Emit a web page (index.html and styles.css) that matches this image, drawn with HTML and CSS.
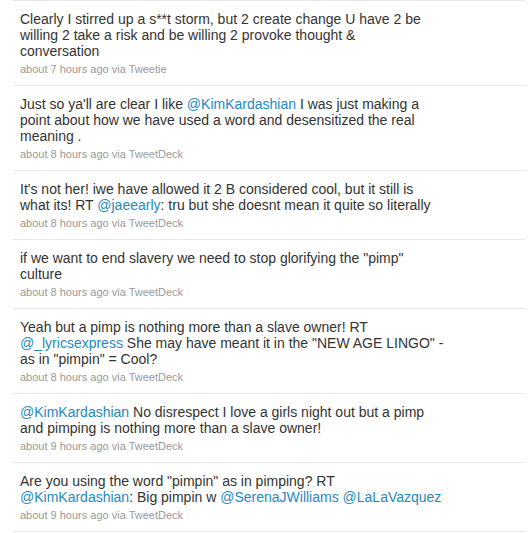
FILE: index.html
```html
<!doctype html>
<html lang="en">
<head>
    <meta charset="UTF-8">
    <title>Tweets</title>
    <link rel="stylesheet" href="styles.css">
</head>
<body>
    <ul class="timeline">
        <li class="status">
            <span class="entry">Clearly I stirred up a s**t storm, but 2 create change U have 2 be<br>willing 2 take a risk and be willing 2 provoke thought &amp;<br>conversation</span>
            <span class="meta">about 7 hours ago via Tweetie</span>
        </li>
        <li class="status">
            <span class="entry">Just so ya'll are clear I like <a href="#">@KimKardashian</a> I was just making a<br>point about how we have used a word and desensitized the real<br>meaning .</span>
            <span class="meta">about 8 hours ago via TweetDeck</span>
        </li>
        <li class="status">
            <span class="entry">It's not her! iwe have allowed it 2 B considered cool, but it still is<br>what its! RT <a href="#">@jaeearly</a>: tru but she doesnt mean it quite so literally</span>
            <span class="meta">about 8 hours ago via TweetDeck</span>
        </li>
        <li class="status">
            <span class="entry">if we want to end slavery we need to stop glorifying the "pimp"<br>culture</span>
            <span class="meta">about 8 hours ago via TweetDeck</span>
        </li>
        <li class="status">
            <span class="entry">Yeah but a pimp is nothing more than a slave owner! RT<br><a href="#">@_lyricsexpress</a> She may have meant it in the "NEW AGE LINGO" -<br>as in "pimpin" = Cool?</span>
            <span class="meta">about 8 hours ago via TweetDeck</span>
        </li>
        <li class="status">
            <span class="entry"><a href="#">@KimKardashian</a> No disrespect I love a girls night out but a pimp<br>and pimping is nothing more than a slave owner!</span>
            <span class="meta">about 9 hours ago via TweetDeck</span>
        </li>
        <li class="status">
            <span class="entry">Are you using the word "pimpin" as in pimping? RT<br><a href="#">@KimKardashian</a>: Big pimpin w <a href="#">@SerenaJWilliams</a> <a href="#">@LaLaVazquez</a></span>
            <span class="meta">about 9 hours ago via TweetDeck</span>
        </li>
    </ul>
</body>
</html>
```

FILE: styles.css
```css
body {
    margin: 0;
    background: #fff;
    font-family: "Liberation Sans", Arial, sans-serif;
    color: #333;
}
.timeline {
    list-style: none;
    margin: 0 0 0 13px;
    padding: 0;
    width: 513px;
    border-top: 1px solid #e8e8e8;
}
.status {
    padding: 10px 0 9px 7px;
    border-bottom: 1px solid #e8e8e8;
}
.entry {
    display: block;
    width: 450px;
    font-size: 14px;
    line-height: 16px;
}
.entry a {
    color: #1f8ac0;
    text-decoration: none;
}
.meta {
    display: block;
    margin-top: 3px;
    font-size: 11px;
    line-height: 14px;
    color: #999;
}
```
